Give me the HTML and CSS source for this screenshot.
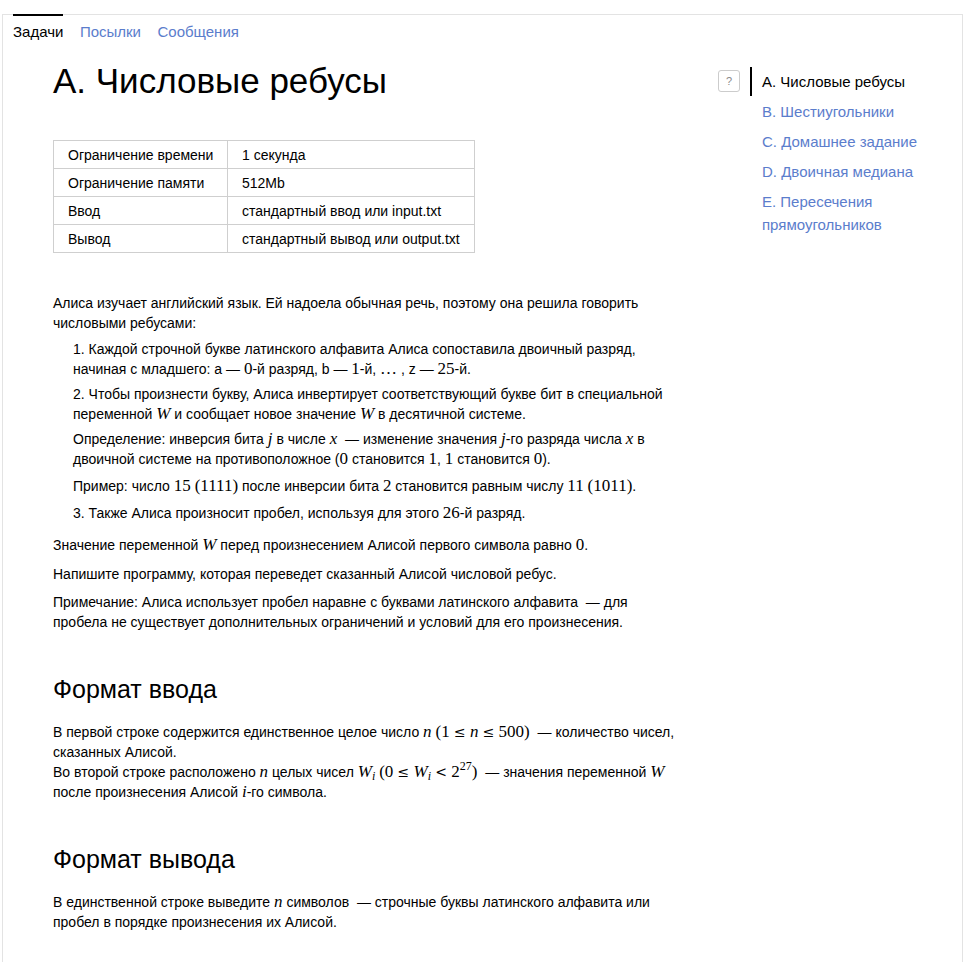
FILE: index.html
```html
<!DOCTYPE html>
<html lang="ru">
<head>
<meta charset="utf-8">
<title>A. Числовые ребусы</title>
<link rel="stylesheet" href="styles.css">
</head>
<body>
<div class="frame">
  <nav class="tabs">
    <a class="tab tab-active" href="#">Задачи</a>
    <a class="tab" href="#">Посылки</a>
    <a class="tab" href="#">Сообщения</a>
  </nav>
  <div class="page">
    <main class="problem">
      <h1 class="title">A. Числовые ребусы</h1>
      <table class="limits">
        <colgroup><col class="col-name"><col></colgroup>
        <tr><td>Ограничение времени</td><td>1 секунда</td></tr>
        <tr><td>Ограничение памяти</td><td>512Mb</td></tr>
        <tr><td>Ввод</td><td>стандартный ввод или input.txt</td></tr>
        <tr><td>Вывод</td><td>стандартный вывод или output.txt</td></tr>
      </table>
      <div class="statement">
        <p class="intro">Алиса изучает английский язык. Ей надоела обычная речь, поэтому она решила говорить числовыми ребусами:</p>
        <div class="steps">
          <p class="step step-1">1. Каждой строчной букве латинского алфавита Алиса сопоставила двоичный разряд, начиная с младшего: a — <span class="mn">0</span>-й разряд, b — <span class="mn">1</span>-й, <span class="mn">…</span> , z — <span class="mn">25</span>-й.</p>
          <p class="step step-2">2. Чтобы произнести букву, Алиса инвертирует соответствующий букве бит в специальной переменной <span class="mi">W</span> и сообщает новое значение <span class="mi">W</span> в десятичной системе.</p>
          <p class="step step-def">Определение: инверсия бита <span class="mi">j</span> в числе <span class="mi">x</span> &nbsp;— изменение значения <span class="mi">j</span>-го разряда числа <span class="mi">x</span> в двоичной системе на противоположное (<span class="mn">0</span> становится <span class="mn">1</span>, <span class="mn">1</span> становится <span class="mn">0</span>).</p>
          <p class="step step-ex">Пример: число <span class="mn">15</span> <span class="mn">(1111)</span> после инверсии бита <span class="mn">2</span> становится равным числу <span class="mn">11</span> <span class="mn">(1011)</span>.</p>
          <p class="step step-3">3. Также Алиса произносит пробел, используя для этого <span class="mn">26</span>-й разряд.</p>
        </div>
        <p class="para">Значение переменной <span class="mi">W</span> перед произнесением Алисой первого символа равно <span class="mn">0</span>.</p>
        <p class="para para-tight">Напишите программу, которая переведет сказанный Алисой числовой ребус.</p>
        <p class="para">Примечание: Алиса использует пробел наравне с буквами латинского алфавита &nbsp;— для пробела не существует дополнительных ограничений и условий для его произнесения.</p>
      </div>
      <h2 class="section">Формат ввода</h2>
      <p class="para">В первой строке содержится единственное целое число <span class="mi">n</span> <span class="mn">(1 <span class="mo">≤</span> <span class="mi">n</span> <span class="mo">≤</span> 500)</span> &nbsp;— количество чисел, сказанных Алисой.<br>Во второй строке расположено <span class="mi">n</span> целых чисел <span class="mi">W<sub class="msub">i</sub></span> <span class="mn">(0 <span class="mo">≤</span> <span class="mi">W<sub class="msub">i</sub></span> <span class="mo">&lt;</span> 2<sup class="msup">27</sup>)</span> &nbsp;— значения переменной <span class="mi">W</span> после произнесения Алисой <span class="mi">i</span>-го символа.</p>
      <h2 class="section">Формат вывода</h2>
      <p class="para">В единственной строке выведите <span class="mi">n</span> символов &nbsp;— строчные буквы латинского алфавита или пробел в порядке произнесения их Алисой.</p>
    </main>
    <aside class="sidebar">
      <span class="help">?</span>
      <ul class="problems">
        <li class="problem-item active">A. Числовые ребусы</li>
        <li class="problem-item"><a href="#">B. Шестиугольники</a></li>
        <li class="problem-item"><a href="#">C. Домашнее задание</a></li>
        <li class="problem-item"><a href="#">D. Двоичная медиана</a></li>
        <li class="problem-item"><a href="#">E. Пересечения прямоугольников</a></li>
      </ul>
    </aside>
  </div>
</div>
</body>
</html>
```

FILE: styles.css
```css
body {
  margin: 0;
  font-family: "Liberation Sans", Arial, sans-serif;
  color: #000;
  background: #fff;
}

.frame {
  margin: 14px 0 0 2px;
  width: 961px;
  min-height: 948px;
  box-sizing: border-box;
  border: 1px solid #e3e3e3;
  border-bottom: 0;
}

.tabs {
  display: flex;
  gap: 16.5px;
  margin-top: -1px;
  padding-left: 10px;
}

.tab {
  font-size: 15px;
  line-height: 18px;
  padding-top: 7px;
  border-top: 2px solid transparent;
  color: #5b7dcc;
  text-decoration: none;
}

.tab-active {
  border-top-color: #000;
  color: #000;
}

.page {
  display: flex;
  align-items: flex-start;
  padding: 20px 0 0 50px;
}

.problem {
  width: 628px;
  font-size: 14px;
  line-height: 20px;
}

.title {
  margin: 0 0 39px;
  font-size: 35px;
  line-height: 40px;
  font-weight: normal;
}

.limits {
  border-collapse: collapse;
  table-layout: fixed;
  width: 422px;
}

.col-name {
  width: 174px;
}

.limits td {
  border: 1px solid #cfcfcf;
  padding: 5px 14px 3px;
  line-height: 19px;
  font-size: 14px;
  white-space: nowrap;
}

.statement {
  margin-top: 40px;
}

.intro {
  margin: 0 0 6px;
}

.steps {
  padding-left: 20px;
}

.step {
  margin: 0;
}

.step-1 { margin-bottom: 5px; }
.step-2 { margin-bottom: 5px; }
.step-def { margin-bottom: 7px; }
.step-ex { margin-bottom: 7px; }
.step-3 { margin-bottom: 12px; }

.para {
  margin: 0 0 9px;
}

.para-tight {
  margin-bottom: 8px;
}

.section {
  margin: 42px 0 18px;
  font-size: 25px;
  line-height: 30px;
  font-weight: normal;
}

.mi {
  font-family: "Liberation Serif", "Times New Roman", serif;
  font-style: italic;
  font-size: 17px;
  line-height: 1;
}

.mn {
  font-family: "Liberation Serif", "Times New Roman", serif;
  font-size: 17px;
  line-height: 1;
}

.mn .mi {
  font-size: inherit;
}

.mo {
  font-family: "DejaVu Serif", serif;
  font-size: 14px;
}

.msub {
  font-size: 12px;
  line-height: 0;
  vertical-align: -3px;
}

.msup {
  font-size: 12px;
  line-height: 0;
  vertical-align: 7px;
}

.sidebar {
  display: flex;
  align-items: flex-start;
  margin-left: 37px;
}

.help {
  display: flex;
  align-items: center;
  justify-content: center;
  width: 22px;
  height: 22px;
  margin: 9px 10px 0 0;
  box-sizing: border-box;
  border: 1px solid #cccccc;
  border-radius: 3px;
  font-size: 11px;
  color: #8a8a8a;
}

.problems {
  list-style: none;
  width: 190px;
  margin: 6px 0 0;
  padding: 0;
  font-size: 15px;
  line-height: 23px;
}

.problem-item {
  padding: 3px 0 3px 10px;
  margin-bottom: 1px;
  border-left: 2px solid transparent;
}

.problem-item.active {
  border-left-color: #000;
}

.problem-item a {
  color: #5b7dcc;
  text-decoration: none;
}
```
